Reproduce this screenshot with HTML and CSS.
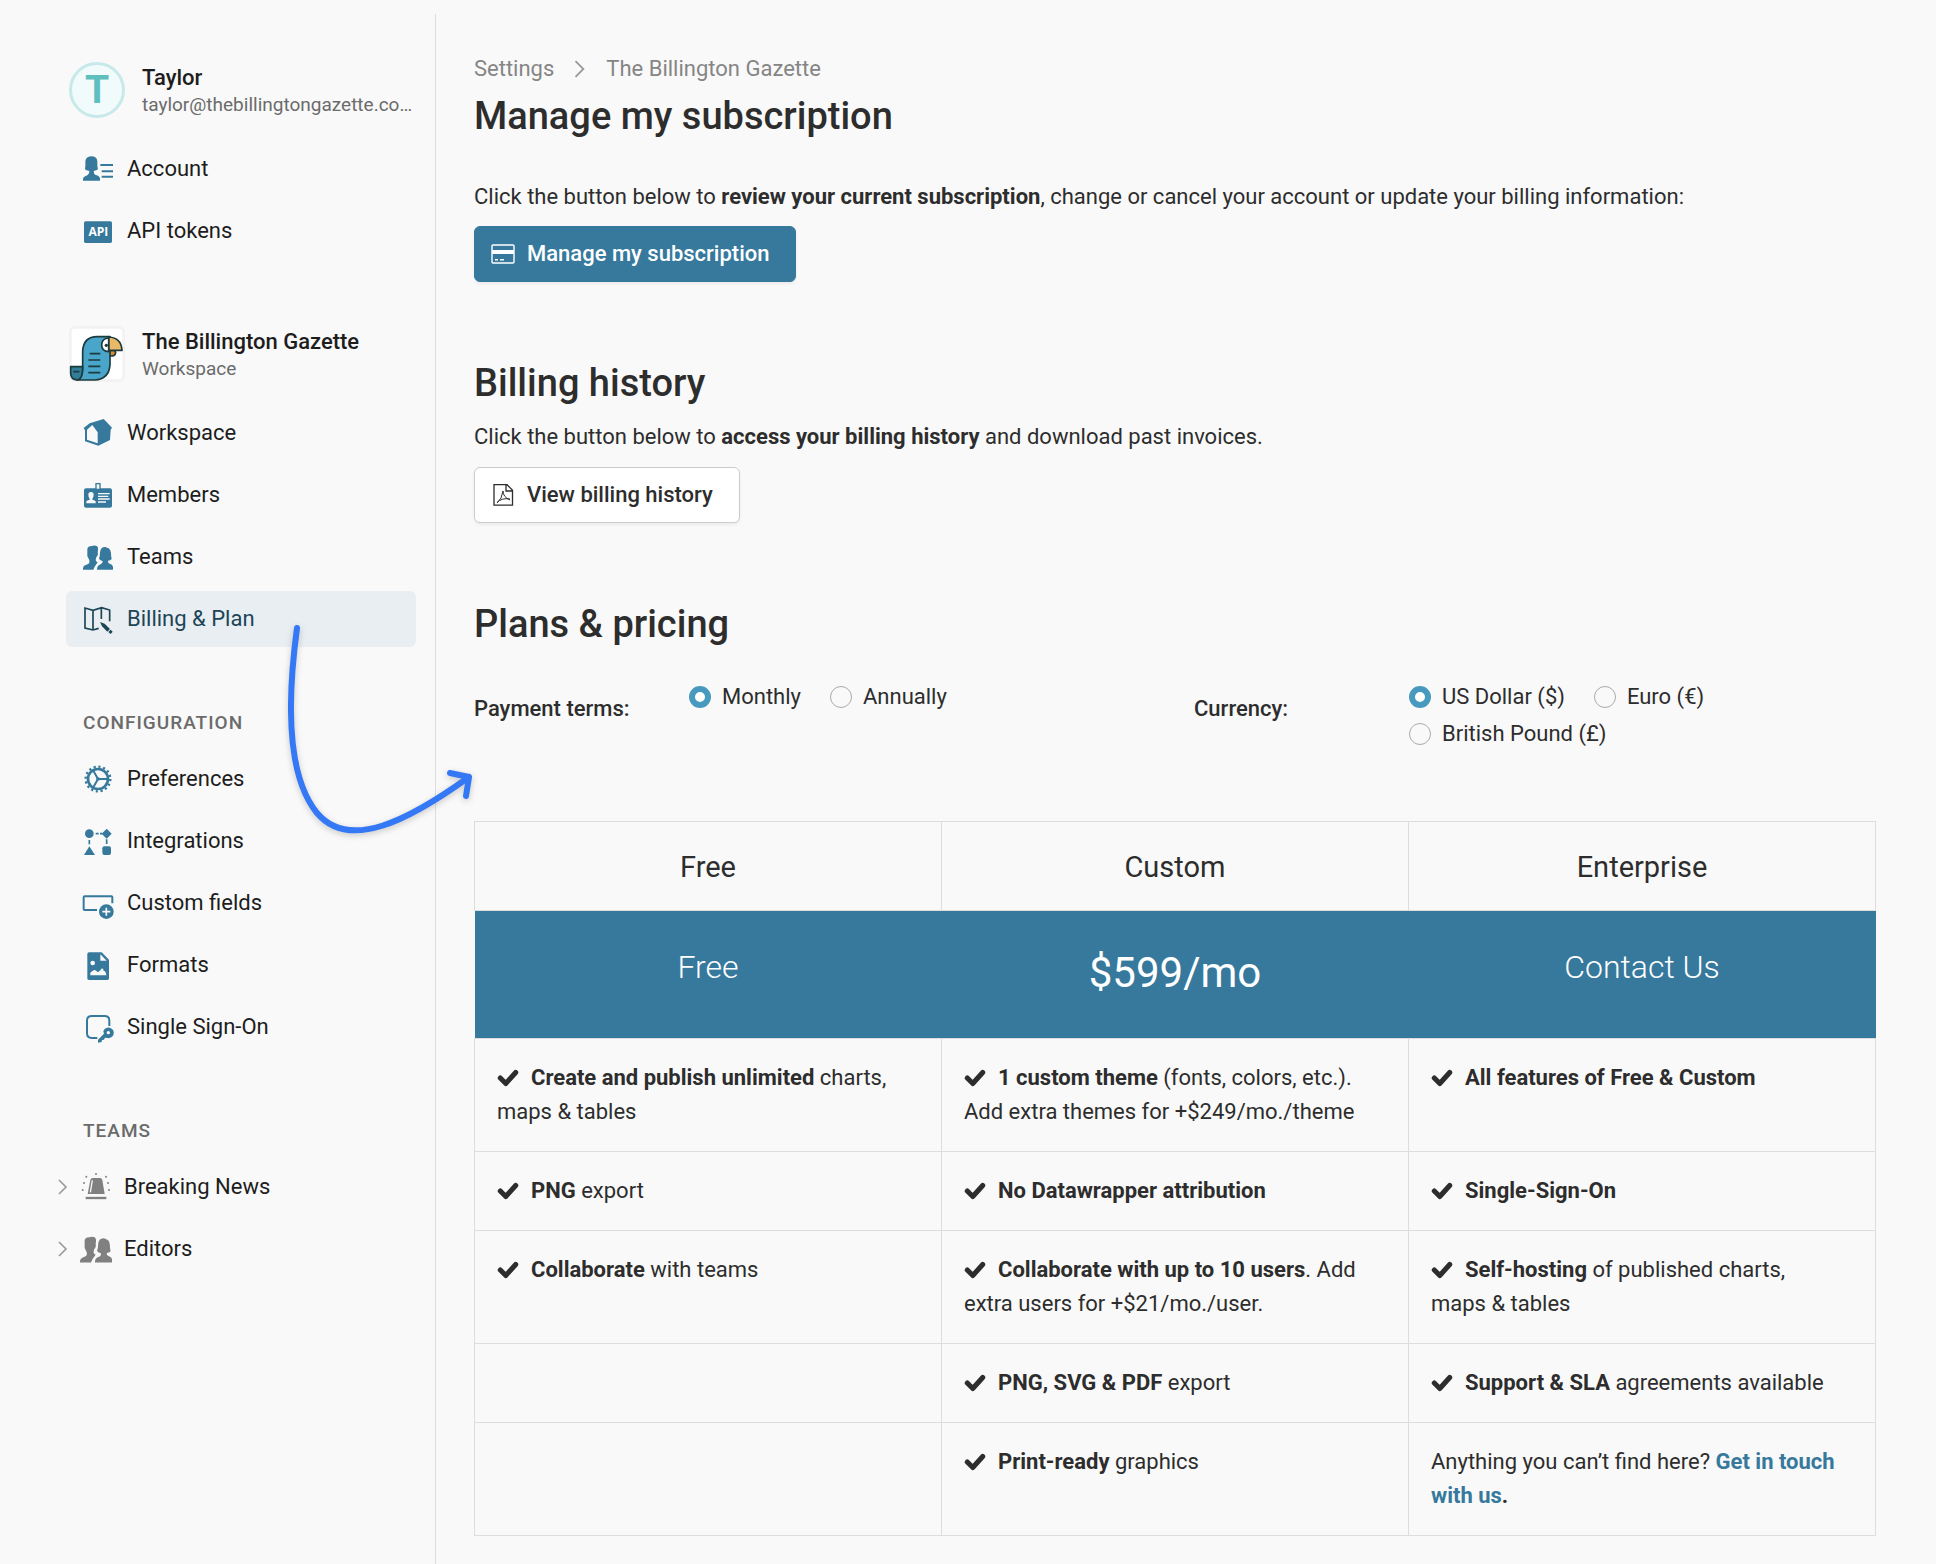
FILE: index.html
```html
<!DOCTYPE html>
<html lang="en">

<head>
    <meta charset="UTF-8">
    <meta name="viewport" content="width=device-width, initial-scale=1.0">
    <title>Manage my subscription</title>
    <link rel="stylesheet" href="styles.css">
</head>

<body>
    <!-- shared symbols -->
    <svg class="symbols" aria-hidden="true">
        <symbol id="people" viewBox="0 0 90 90">
            <path d="M13 24q-1-12 14-12 4-3 12-1 7 2 6 12l-1 10q2 2 0 6-1 5-4 6l-2 9q1 5 6 7l-9 13-4 9H0v-5q1-7 8-9 10-3 11-7v-8q-3-4-4-8-3-3-2-7z" />
            <path d="M48 50q3-8 3-18 1-17 15-17 4 0 6 2 11 2 12 17 0 10 2 17-3 5-11 5 0 8 5 9 10 3 10 11v7H42q0-8 3-11 3-3 8-5 6-1 6-10-8-1-11-7z" />
        </symbol>
        <symbol id="chevron" viewBox="0 0 10 16">
            <path d="M1 1l7 7-7 7" fill="none" stroke="currentColor" stroke-width="1.6" />
        </symbol>
        <symbol id="check" viewBox="0 0 20 16">
            <path d="M3 8l5 5 9-10" fill="none" stroke="currentColor" stroke-width="4.6" stroke-linejoin="round" stroke-linecap="round" />
        </symbol>
    </svg>

    <div class="layout">
        <aside class="sidebar">
            <div class="profile">
                <div class="avatar avatar-user">T</div>
                <div class="profile-info">
                    <strong>Taylor</strong>
                    <span>taylor@thebillingtongazette.com</span>
                </div>
            </div>
            <nav class="menu">
                <a href="#">
                    <svg class="icon" viewBox="0 0 90 90">
                        <path d="M6 46q2-12 1-24Q8 8 24 7q18 0 19 15-1 14 2 24-4 4-13 5 0 10 6 12 13 3 13 11v6H0v-6q0-5 8-8 11-3 11-15-10-1-13-5z" />
                        <path d="M52 33h38M56 52h34M56 68h34" stroke="currentColor" stroke-width="6" />
                    </svg>
                    Account
                </a>
                <a href="#">
                    <svg class="icon" viewBox="0 0 90 90">
                        <rect x="3" y="16" width="84" height="65" rx="5" />
                        <text class="api" x="46" y="61">API</text>
                    </svg>
                    API tokens
                </a>
            </nav>

            <div class="profile">
                <svg class="avatar" viewBox="0 0 168 168">
                    <rect x="4" y="4" width="160" height="160" rx="14" fill="#fff" stroke="#f2f2f2" stroke-width="8" />
                    <g stroke="#1b3b3d" stroke-width="5" stroke-linejoin="round">
                        <path d="M121 73v16q18 4 19-10l-3-6z" fill="#e08a2c" />
                        <path d="M41 122V76q2-44 44-44h38v84q-3 44-46 46H24q18-4 17-40z" fill="#4aa5cb" />
                        <path d="M5 122h36q0 38-16 40-20-1-20-20z" fill="#327d98" />
                        <path d="M119 33q38 2 40 40h-40z" fill="#e9b968" />
                        <path d="M119 36q-21 2-21 21t21 20z" fill="#fff" />
                        <path d="M62 83h32M58 102h36M58 121h36M58 140h36M13 137h18" fill="none" />
                    </g>
                    <circle cx="112" cy="58" r="5" fill="#1b3b3d" />
                </svg>
                <div class="profile-info">
                    <strong>The Billington Gazette</strong>
                    <span>Workspace</span>
                </div>
            </div>
            <nav class="menu">
                <a href="#">
                    <svg class="icon" viewBox="0 0 90 90">
                        <path d="M2 30L20 16 62 3l8 8 17 18-4 6-2 31-35 17L6 70V37z" />
                        <path class="cut" d="M12 35l16-14 16 22v33l-32-11z" />
                    </svg>
                    Workspace
                </a>
                <a href="#">
                    <svg class="icon" viewBox="0 0 90 90">
                        <rect x="3" y="25" width="84" height="58" rx="6" />
                        <path class="cut" d="M39 11h12v17H39z" stroke="currentColor" stroke-width="4" />
                        <path class="cut" d="M16 44q0-8 8-8t8 8-4 12v3q8 2 10 5v6H10v-6q2-3 10-5v-3q-4-4-4-12z" />
                        <path class="cut-line" d="M45 41h35M45 49h31M45 57h35M45 66h24" stroke-width="4" />
                    </svg>
                    Members
                </a>
                <a href="#">
                    <svg class="icon"><use href="#people" /></svg>
                    Teams
                </a>
                <a href="#" class="current">
                    <svg class="icon" viewBox="0 0 90 90">
                        <path d="M47 73l-17 5-24-6V12l24 7 26-8 24 7v34M30 19v58M55 11v34" fill="none" stroke="currentColor" stroke-width="5" />
                        <path d="M51 54l14 5 16 16-8 8-16-16zM83 77l6 6-6 7-7-6z" />
                    </svg>
                    Billing &amp; Plan
                    <!-- pointer from the menu entry to the content -->
                    <svg class="pointer" viewBox="0 0 210 230" aria-hidden="true">
                        <path d="M21 18C11 92 11 166 41 203c32 38 91 8 152-36M174 163l19 4-3 19" />
                    </svg>
                </a>
            </nav>

            <h3>Configuration</h3>
            <nav class="menu">
                <a href="#">
                    <svg class="icon" viewBox="0 0 90 90" fill="none" stroke="currentColor">
                        <circle cx="45" cy="45" r="30" stroke-width="8" />
                        <circle cx="45" cy="45" r="37" stroke-width="7" stroke-dasharray="6.5 8.03" />
                        <path d="M45 45h30M45 45L31 20M45 45L31 70" stroke-width="6" />
                        <circle cx="45" cy="45" r="3" stroke-width="5" />
                    </svg>
                    Preferences
                </a>
                <a href="#">
                    <svg class="icon" viewBox="0 0 90 90">
                        <circle cx="19" cy="23" r="13" />
                        <path d="M71 8l15 15-15 15-15-15zM19 61l17 26H3z" />
                        <rect x="58" y="61" width="26" height="26" rx="6" />
                        <path d="M38 23h9M51 23h7M19 42v13M71 40v14" fill="none" stroke="currentColor" stroke-width="5" />
                    </svg>
                    Integrations
                </a>
                <a href="#">
                    <svg class="icon" viewBox="0 0 90 90">
                        <path d="M88 46V28q0-3-3-3H5q-3 0-3 3v35q0 3 3 3h37" fill="none" stroke="currentColor" stroke-width="6" />
                        <circle cx="70" cy="71" r="22" />
                        <path class="cut-line" d="M58 71h24M70 59v24" stroke-width="5" />
                    </svg>
                    Custom fields
                </a>
                <a href="#">
                    <svg class="icon" viewBox="0 0 90 90">
                        <path d="M18 7h38l22 22v56q0 5-5 5H18q-5 0-5-5V12q0-5 5-5z" />
                        <path class="cut" d="M52 13v19h19zM22 76v-8q12-12 17-6l6 5q10-9 10-11 8-2 6 6 8 0 9 14z" />
                        <circle class="cut" cx="29" cy="39" r="7" />
                    </svg>
                    Formats
                </a>
                <a href="#">
                    <svg class="icon" viewBox="0 0 90 90">
                        <path d="M79 42V26q0-14-14-14H26q-14 0-14 14v38q0 14 14 14h17" fill="none" stroke="currentColor" stroke-width="6" />
                        <path d="M61 58a16 16 0 1 1 12 20l-7-1-3 6-6 1-1 6-11 2v-9l18-18z" />
                        <circle class="cut" cx="76" cy="62" r="5" />
                    </svg>
                    Single Sign-On
                </a>
            </nav>

            <h3>Teams</h3>
            <nav class="menu teams">
                <a href="#">
                    <svg class="chevron"><use href="#chevron" /></svg>
                    <svg class="icon" viewBox="0 0 96 96">
                        <path d="M23 69l8-42q1-6 8-6h21q6 0 7 6l7 42z" />
                        <path class="cut-line" d="M37 28l-6 36" stroke-width="4" />
                        <path d="M17 81h62" stroke="currentColor" stroke-width="7" />
                        <g>
                            <circle cx="48" cy="9" r="3" />
                            <circle cx="19" cy="17" r="3" />
                            <circle cx="78" cy="17" r="3" />
                            <circle cx="12" cy="36" r="3" />
                            <circle cx="84" cy="36" r="3" />
                            <circle cx="8" cy="57" r="3" />
                            <circle cx="87" cy="57" r="3" />
                        </g>
                    </svg>
                    Breaking News
                </a>
                <a href="#">
                    <svg class="chevron"><use href="#chevron" /></svg>
                    <svg class="icon"><use href="#people" /></svg>
                    Editors
                </a>
            </nav>
        </aside>

        <main class="content">
            <nav class="breadcrumb">
                <a href="#">Settings</a>
                <svg class="chevron"><use href="#chevron" /></svg>
                <a href="#">The Billington Gazette</a>
            </nav>
            <section>
                <h1>Manage my subscription</h1>
                <p class="intro">Click the button below to <b>review your current subscription</b>, change or cancel your account or update your billing information:</p>
                <button type="button" class="btn btn-primary">
                    <svg viewBox="0 0 24 24">
                        <rect x="1" y="3" width="22" height="18" rx="1" fill="none" stroke="currentColor" stroke-width="1.4" />
                        <path d="M1 8h22v4H1zM4 17h3v1.4H4zM9 17h4v1.4H9z" />
                    </svg>
                    Manage my subscription
                </button>
            </section>

            <section>
                <h2>Billing history</h2>
                <p>Click the button below to <b>access your billing history</b> and download past invoices.</p>
                <button type="button" class="btn">
                    <svg viewBox="0 0 24 24" fill="none" stroke="currentColor" stroke-width="1.3">
                        <path d="M3 1.700h13l5.500 5.500v15H3zM15 2v6h6" />
                        <path d="M6 20q5-4 6-12M12 8q0 6 7 9M6 19.500q5-5 13-3.500" stroke-width="1" />
                    </svg>
                    View billing history
                </button>
            </section>

            <section>
                <h2>Plans &amp; pricing</h2>
                <form class="filters">
                    <div class="filter" role="radiogroup" aria-labelledby="terms">
                        <span class="filter-name" id="terms">Payment terms:</span>
                        <div class="options">
                            <label><input type="radio" name="terms" checked> Monthly</label>
                            <label><input type="radio" name="terms"> Annually</label>
                        </div>
                    </div>
                    <div class="filter" role="radiogroup" aria-labelledby="currency">
                        <span class="filter-name" id="currency">Currency:</span>
                        <div class="options">
                            <label><input type="radio" name="currency" checked> US Dollar ($)</label>
                            <label><input type="radio" name="currency"> Euro (€)</label>
                            <label><input type="radio" name="currency"> British Pound (£)</label>
                        </div>
                    </div>
                </form>

                <table class="plans">
                    <thead>
                        <tr>
                            <th>Free</th>
                            <th>Custom</th>
                            <th>Enterprise</th>
                        </tr>
                    </thead>
                    <tbody>
                        <tr class="price">
                            <td>Free</td>
                            <td class="amount">$599/mo</td>
                            <td>Contact Us</td>
                        </tr>
                        <tr>
                            <td><svg class="check"><use href="#check" /></svg><b>Create and publish unlimited</b> charts, maps&nbsp;&amp;&nbsp;tables</td>
                            <td><svg class="check"><use href="#check" /></svg><b>1 custom theme</b> (fonts, colors, etc.). Add extra themes for +$249/mo./theme</td>
                            <td><svg class="check"><use href="#check" /></svg><b>All features of Free &amp; Custom</b></td>
                        </tr>
                        <tr>
                            <td><svg class="check"><use href="#check" /></svg><b>PNG</b> export</td>
                            <td><svg class="check"><use href="#check" /></svg><b>No Datawrapper attribution</b></td>
                            <td><svg class="check"><use href="#check" /></svg><b>Single-Sign-On</b></td>
                        </tr>
                        <tr>
                            <td><svg class="check"><use href="#check" /></svg><b>Collaborate</b> with teams</td>
                            <td><svg class="check"><use href="#check" /></svg><b>Collaborate with up to 10 users</b>. Add extra users for +$21/mo./user.</td>
                            <td><svg class="check"><use href="#check" /></svg><b>Self-hosting</b> of published charts, maps&nbsp;&amp;&nbsp;tables</td>
                        </tr>
                        <tr>
                            <td></td>
                            <td><svg class="check"><use href="#check" /></svg><b>PNG, SVG &amp; PDF</b> export</td>
                            <td><svg class="check"><use href="#check" /></svg><b>Support &amp; SLA</b> agreements available</td>
                        </tr>
                        <tr>
                            <td></td>
                            <td><svg class="check"><use href="#check" /></svg><b>Print-ready</b> graphics</td>
                            <td>Anything you can’t find here? <b><a href="#">Get in touch with us</a>.</b></td>
                        </tr>
                    </tbody>
                </table>
            </section>
        </main>
    </div>
</body>

</html>
```
FILE: styles.css
```css
* {
    margin: 0;
    padding: 0;
    box-sizing: border-box;
}

body {
    padding-top: 14px;
    background-color: #f9f9f9;
    color: #2d2d2d;
    font-family: Roboto, "Liberation Sans", sans-serif;
    font-size: 22px;
    line-height: 34px;
}

a {
    color: inherit;
    text-decoration: none;
}

svg {
    flex-shrink: 0;
    fill: currentColor;
}

svg[fill="none"] {
    fill: none;
}

.symbols {
    position: absolute;
    width: 0;
    height: 0;
}

.layout {
    display: flex;
    min-height: calc(100vh - 14px);
}

/* sidebar */
.sidebar {
    flex-shrink: 0;
    width: 436px;
    padding: 48px 19px 0 57px;
    border-right: 1px solid #ddd;
    color: #1d1d1d;
}

.profile {
    display: flex;
    gap: 17px;
    margin: 0 0 23px 12px;
}

.menu + .profile {
    margin-top: 67px;
}

.avatar {
    flex-shrink: 0;
    width: 56px;
    height: 56px;
}

.avatar-user {
    border: 3px solid #c8e9e9;
    border-radius: 50%;
    background-color: #f1fbfc;
    color: #5fbfbf;
    font-size: 39px;
    font-weight: 700;
    line-height: 50px;
    text-align: center;
}

.profile-info {
    min-width: 0;
}

.profile-info strong,
.profile-info span {
    display: block;
    overflow: hidden;
    white-space: nowrap;
    text-overflow: ellipsis;
}

.profile-info strong {
    font-weight: 500;
    line-height: 32px;
}

.profile-info span {
    color: #6b6b6b;
    font-size: 19px;
    line-height: 22px;
}

.menu {
    display: flex;
    flex-direction: column;
    gap: 6px;
    margin-left: 9px;
}

.menu a {
    position: relative;
    display: flex;
    align-items: center;
    gap: 14px;
    height: 56px;
    padding-left: 17px;
    border-radius: 6px;
}

.menu .current {
    background-color: #e9eef2;
    color: #1c4557;
}

.icon {
    width: 30px;
    height: 30px;
    color: #36799d;
    overflow: visible;
}

.current .icon {
    color: #1c4557;
}

.cut {
    fill: #f9f9f9;
}

.cut-line {
    fill: none;
    stroke: #f9f9f9;
}

.api {
    fill: #fff;
    font-family: "Open Sans", sans-serif;
    font-size: 36px;
    font-weight: 700;
    text-anchor: middle;
}

.sidebar h3 {
    margin: 62px 0 14px 26px;
    color: #6b6b6b;
    font-size: 19px;
    font-weight: 500;
    line-height: 28px;
    letter-spacing: 1px;
    text-transform: uppercase;
}

.chevron {
    width: 10px;
    height: 16px;
    color: #999;
}

.teams {
    margin-left: 0;
}

.teams a {
    padding-left: 1px;
    gap: 12px;
}

.teams .icon {
    width: 32px;
    height: 32px;
    color: #808080;
}

/* starts on the current entry and ends in the content */
.pointer {
    position: absolute;
    left: 210px;
    top: 19px;
    z-index: 1;
    width: 210px;
    height: 230px;
    fill: none;
    stroke: #3478f6;
    stroke-width: 6px;
    stroke-linecap: round;
    stroke-linejoin: round;
    filter: drop-shadow(0 2px 3px rgba(0, 0, 0, .2));
    pointer-events: none;
}

/* content */
.content {
    flex: 1;
    min-width: 0;
    padding: 38px 60px 26px 38px;
}

.breadcrumb {
    display: flex;
    align-items: center;
    gap: 20px;
    margin-bottom: 7px;
    color: #858585;
}

.breadcrumb .chevron {
    width: 12px;
    height: 18px;
}

section + section {
    margin-top: 78px;
}

h1,
h2 {
    font-size: 38px;
    font-weight: 500;
    line-height: 46px;
    margin-bottom: 14px;
}

h1 {
    margin-bottom: 41px;
}

p {
    margin-bottom: 13px;
}

.intro {
    margin-bottom: 12px;
}

.btn {
    display: flex;
    align-items: center;
    gap: 12px;
    height: 56px;
    padding: 0 26px 0 16px;
    border: 1px solid #ccc;
    border-radius: 6px;
    background-color: #fff;
    box-shadow: 0 2px 3px rgba(0, 0, 0, .06);
    color: #2d2d2d;
    font: inherit;
    font-weight: 500;
    cursor: pointer;
}

.btn svg {
    width: 24px;
    height: 24px;
}

.btn-primary {
    border-color: #36799d;
    background-color: #36799d;
    color: #fff;
}

.filters {
    display: grid;
    grid-template-columns: 1fr 1fr;
    gap: 38px;
    margin: 34px 0 71px;
    line-height: 32px;
}

.filter {
    display: flex;
}

.filter-name {
    flex-shrink: 0;
    width: 215px;
    padding-top: 12px;
    font-weight: 500;
}

.options {
    display: flex;
    flex-wrap: wrap;
    align-content: flex-start;
    gap: 5px 29px;
}

.options label {
    display: flex;
    align-items: center;
    gap: 11px;
}

.options input {
    appearance: none;
    width: 22px;
    height: 22px;
    border: 1px solid #aaa;
    border-radius: 50%;
}

.options input:checked {
    border: 6px solid #4799bd;
    background-color: #fff;
}

.plans {
    width: 100%;
    table-layout: fixed;
    border-collapse: collapse;
}

.plans th,
.plans td {
    padding: 22px;
    border: 1px solid #ddd;
    vertical-align: top;
}

.plans th {
    padding: 28px 22px 26px;
    font-size: 29px;
    font-weight: 400;
}

.plans .price td {
    height: 128px;
    padding-top: 39px;
    border-width: 1px 0;
    background-color: #36799d;
    color: #fff;
    font-size: 32px;
    font-weight: 300;
    text-align: center;
}

.plans .price .amount {
    padding-top: 45px;
    font-size: 42px;
    font-weight: 400;
}

.plans td a {
    color: #36799d;
}

.check {
    width: 22px;
    height: 18px;
    margin-right: 12px;
    vertical-align: -2px;
}
```
